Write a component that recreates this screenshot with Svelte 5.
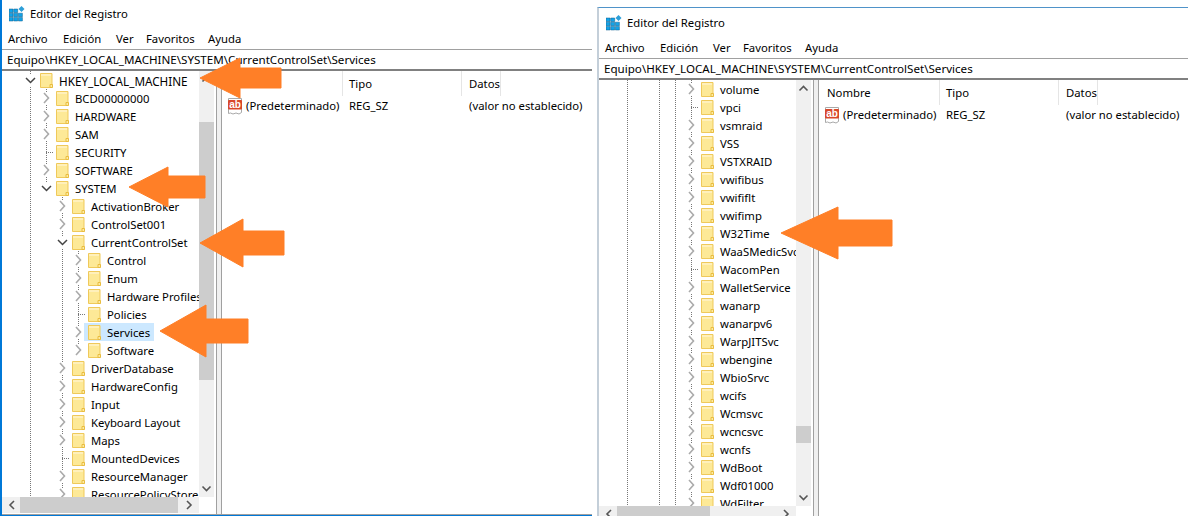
<script>
  const menu = ['Archivo', 'Edición', 'Ver', 'Favoritos', 'Ayuda'];
  const path = 'Equipo\\HKEY_LOCAL_MACHINE\\SYSTEM\\CurrentControlSet\\Services';

  // kind: o = open, c = collapsed, l = leaf; end = last sibling (line stops half way)
  const row = (n, level, kind, guides, extra = {}) => ({ n, level, kind, guides, ...extra });

  const leftRows = [
    row('HKEY_LOCAL_MACHINE', 0, 'o', [], { wide: true }),
    row('BCD00000000', 1, 'c', [0]),
    row('HARDWARE', 1, 'c', [0]),
    row('SAM', 1, 'c', [0]),
    row('SECURITY', 1, 'l', [0]),
    row('SOFTWARE', 1, 'c', [0]),
    row('SYSTEM', 1, 'o', [0], { end: true }),
    row('ActivationBroker', 2, 'c', [0]),
    row('ControlSet001', 2, 'c', [0]),
    row('CurrentControlSet', 2, 'o', [0]),
    row('Control', 3, 'c', [0, 2]),
    row('Enum', 3, 'c', [0, 2]),
    row('Hardware Profiles', 3, 'c', [0, 2]),
    row('Policies', 3, 'l', [0, 2]),
    row('Services', 3, 'c', [0, 2], { sel: true }),
    row('Software', 3, 'c', [0, 2], { end: true }),
    row('DriverDatabase', 2, 'c', [0]),
    row('HardwareConfig', 2, 'c', [0]),
    row('Input', 2, 'c', [0]),
    row('Keyboard Layout', 2, 'c', [0]),
    row('Maps', 2, 'c', [0]),
    row('MountedDevices', 2, 'l', [0]),
    row('ResourceManager', 2, 'c', [0]),
    row('ResourcePolicyStore', 2, 'c', [0])
  ];

  const leaves = ['vpci', 'WacomPen'];
  const rightRows = ['volume', 'vpci', 'vsmraid', 'VSS', 'VSTXRAID', 'vwifibus', 'vwififlt', 'vwifimp', 'W32Time',
    'WaaSMedicSvc', 'WacomPen', 'WalletService', 'wanarp', 'wanarpv6', 'WarpJITSvc', 'wbengine', 'WbioSrvc', 'wcifs',
    'Wcmsvc', 'wcncsvc', 'wcnfs', 'WdBoot', 'Wdf01000', 'WdFilter']
    .map((n) => row(n, 4, leaves.includes(n) ? 'l' : 'c', [0, 2, 3]));

  const windows = [
    { cls: 'back', rows: leftRows, vTop: 51, vH: 258, hW: 158 },
    { cls: 'front', rows: rightRows, vTop: 346, vH: 17, hW: 93 }
  ];

  // tip x, tip y, neck x, head half height, shaft half height, tail x
  const arrows = [
    [200, 78, 240, 20, 10, 281],
    [129, 187, 168, 20, 11, 205],
    [200, 243, 243, 24, 12, 284],
    [160, 331, 206, 26, 12, 248],
    [781, 233, 838, 26, 13, 892]
  ].map(([x, y, nx, hh, sh, tx]) =>
    `${x},${y} ${nx},${y - hh} ${nx},${y - sh} ${tx},${y - sh} ${tx},${y + sh} ${nx},${y + sh} ${nx},${y + hh}`
  );
</script>

{#snippet folder()}
  <svg class="folder" width="13" height="16" viewBox="0 0 13 16">
    <path d="M.5 1.500h11.500v14h-11.500z" fill="#fde997" stroke="#efc95a" />
    <path d="M1 2h10v2H1z" fill="#fff0bb" />
    <path d="M10 15.500v-3h2.500v3z" fill="#fdeaa5" stroke="#e9bd3f" />
  </svg>
{/snippet}

{#snippet win(w)}
  <section class="win {w.cls}">
    <header class="title">
      <svg width="16" height="16" viewBox="0 0 16 16">
        <path d="M0 3h4v3.500H0zM4.700 3h4v3.500h-4zM0 7.200h4v3.500H0zM4.700 7.200h4v3.500h-4zM9.400 7.200h4v3.500h-4zM0 11.400h4V15H0zM4.700 11.400h4V15h-4zM9.400 11.400h4V15h-4z" fill="#12a3e8" stroke="#0c5f8e" stroke-width=".5" />
        <path d="M12.500 0l3 3-3 3-3-3z" fill="#2d9fd8" />
      </svg>
      <span>Editor del Registro</span>
    </header>
    <nav class="menu">
      {#each menu as m}<span>{m}</span>{/each}
    </nav>
    <div class="address">{path}</div>
    <div class="panes">
      <div class="tree">
        <div class="viewport">
          {#each w.rows as r}
            <div class="row">
              {#each Array(r.level) as _, i}
                <span class="cell" class:line={r.guides.includes(i)}></span>
              {/each}
              <span class="cell line" class:end={r.end} class:leaf={r.kind === 'l'}>
                {#if r.kind === 'o'}
                  <svg class="chev" width="13" height="12" viewBox="0 0 13 12"><path d="M2 4l4.500 4.500L11 4" fill="none" stroke="#444" stroke-width="1.500" /></svg>
                {:else if r.kind === 'c'}
                  <svg class="chev" width="9" height="12" viewBox="0 0 9 12"><path d="M2 1l4.500 5L2 11" fill="none" stroke="#aaa" stroke-width="1.600" /></svg>
                {/if}
              </span>
              <span class="item" class:sel={r.sel}>
                {@render folder()}
                <span class="name" class:wide={r.wide}>{r.n}</span>
              </span>
            </div>
          {/each}
        </div>
        <div class="vbar">
          <svg class="up" width="15" height="17" viewBox="0 0 15 17"><path d="M3.500 10.500l4-4 4 4" fill="none" stroke="#555" stroke-width="1.600" /></svg>
          <div class="vtrack">
            <div class="vthumb" style="margin-top:{w.vTop - 17}px;height:{w.vH}px"></div>
          </div>
          <svg class="down" width="15" height="17" viewBox="0 0 15 17"><path d="M3.500 6.500l4 4 4-4" fill="none" stroke="#555" stroke-width="1.600" /></svg>
        </div>
        <div class="hbar">
          <svg width="18" height="16" viewBox="0 0 18 16"><path d="M12 4l-4 4 4 4" fill="none" stroke="#555" stroke-width="1.600" /></svg>
          <div class="hthumb" style="width:{w.hW}px"></div>
          <div class="htrack"></div>
          <svg width="18" height="16" viewBox="0 0 18 16"><path d="M6 4l4 4-4 4" fill="none" stroke="#555" stroke-width="1.600" /></svg>
        </div>
      </div>
      <div class="splitter"></div>
      <div class="list">
        <div class="head">
          <span class="c1">Nombre</span><span class="c2">Tipo</span><span class="c3">Datos</span>
        </div>
        <div class="entry">
          <span class="c1 valname">
            <svg width="16" height="17" viewBox="0 0 16 17">
              <path d="M1.500.5h13v14l-2.500 1.500-3-1-3 1-2.500-1-2 .500z" fill="#fff" stroke="#a9a9a9" />
              <rect x="1" y="2" width="14" height="9.500" rx="1" fill="#d9482b" />
              <text x="8" y="10" class="ab">ab</text>
            </svg>
            <span>(Predeterminado)</span>
          </span><span class="c2">REG_SZ</span><span class="c3">(valor no establecido)</span>
        </div>
      </div>
    </div>
  </section>
{/snippet}

<main class="desk">
  {#each windows as w}
    {@render win(w)}
  {/each}
  <svg class="arrows" width="1197" height="516" viewBox="0 0 1197 516">
    {#each arrows as points}
      <polygon {points} fill="#ff7f27" stroke="#ff7f27" stroke-width="1" stroke-linejoin="round" />
    {/each}
  </svg>
</main>

<style>
  :global(body) {
    margin: 0;
    background: #fff;
  }
  .desk {
    position: relative;
    width: 1197px;
    height: 516px;
    overflow: hidden;
    font: 11.3px/16px "Noto Sans", sans-serif;
    color: #000;
  }
  .win {
    position: absolute;
    box-sizing: border-box;
    height: 518px;
    display: flex;
    flex-direction: column;
    background: #fff;
    border-left: 2px solid #0078d7;
    border-bottom: 1px solid #0078d7;
  }
  .back {
    left: 0;
    top: -2px;
    width: 592px;
  }
  .front {
    left: 597px;
    top: 7px;
    width: 591px;
    border-top: 1px solid #4f93c9;
    border-left-color: #c4cfd9;
  }
  .title {
    box-sizing: border-box;
    height: 30px;
    flex: none;
    display: flex;
    align-items: center;
    gap: 5px;
    padding: 2px 0 0 7px;
  }
  .front .title {
    height: 29px;
    padding-top: 1px;
  }
  .menu {
    height: 21px;
    flex: none;
    display: grid;
    grid-template-columns: 55px 53px 30px 62px auto;
    justify-content: start;
    align-items: center;
    padding-left: 6px;
  }
  .address {
    box-sizing: border-box;
    height: 22px;
    flex: none;
    padding: 1px 0 0 5px;
    font-size: 11.6px;
    line-height: 17px;
    border-top: 1px solid #a0a0a0;
    border-bottom: 2px solid #808080;
    white-space: nowrap;
  }
  .panes {
    flex: 1;
    min-height: 0;
    display: flex;
    border-bottom: 1px solid #a0a0a0;
  }
  .tree {
    width: 214px;
    flex: none;
    display: grid;
    grid-template: 426px 16px / 197px 15px 2px;
    overflow: hidden;
  }
  .viewport {
    grid-area: 1 / 1;
    overflow: hidden;
    padding-left: 20px;
  }
  .row {
    height: 18px;
    display: flex;
    white-space: nowrap;
  }
  .cell {
    width: 16px;
    height: 18px;
    flex: none;
    display: flex;
    align-items: center;
    justify-content: center;
  }
  .line {
    background: linear-gradient(#777 50%, transparent 50%) 8px 0 / 1px 2px repeat-y;
  }
  .line.end {
    background:
      linear-gradient(#fff, #fff) 8px 9px / 1px 9px no-repeat,
      linear-gradient(#777 50%, transparent 50%) 8px 0 / 1px 2px repeat-y;
  }
  .line.leaf {
    background:
      linear-gradient(#fff, #fff) 0 9px / 8px 1px no-repeat,
      linear-gradient(90deg, #777 50%, transparent 50%) 0 9px / 2px 1px repeat-x,
      linear-gradient(#777 50%, transparent 50%) 8px 0 / 1px 2px repeat-y;
  }
  .chev {
    background: #fff;
  }
  .item {
    margin-left: -2px;
    padding: 0 4px;
    height: 18px;
    display: flex;
    align-items: center;
    gap: 6px;
  }
  .item.sel {
    background: #cce8ff;
  }
  .folder {
    flex: none;
  }
  .name {
    padding-top: 2px;
  }
  .name.wide {
    font-size: 11.7px;
  }
  .vbar {
    grid-area: 1 / 2;
    background: #f0f0f0;
    display: flex;
    flex-direction: column;
    height: 426px;
  }
  .up,
  .down {
    flex: none;
  }
  .vtrack {
    flex: 1;
    min-height: 0;
    overflow: hidden;
  }
  .vthumb {
    background: #cdcdcd;
  }
  .hbar {
    grid-area: 2 / 1 / 2 / 3;
    display: flex;
    align-items: stretch;
    background: #f0f0f0;
    width: 197px;
  }
  .hthumb {
    background: #cdcdcd;
    flex: none;
  }
  .htrack {
    flex: 1;
  }
  .hbar svg {
    flex: none;
  }
  .splitter {
    box-sizing: border-box;
    width: 6px;
    flex: none;
    background: #f0f0f0;
    border-left: 1px solid #a0a0a0;
    border-right: 1px solid #a0a0a0;
  }
  .list {
    flex: 1;
    min-width: 0;
    white-space: nowrap;
  }
  .head {
    height: 25px;
    display: flex;
    align-items: stretch;
  }
  .head span {
    display: flex;
    align-items: center;
    border-right: 1px solid #e5e5e5;
    box-sizing: border-box;
  }
  .entry {
    box-sizing: border-box;
    height: 18px;
    padding-top: 2px;
    display: flex;
    align-items: center;
  }
  .c1 {
    width: 121px;
    flex: none;
    box-sizing: border-box;
    padding-left: 8px;
  }
  .c2 {
    width: 119px;
    flex: none;
    box-sizing: border-box;
    padding-left: 6px;
  }
  .c3 {
    flex: none;
    box-sizing: border-box;
    padding-left: 7px;
  }
  .valname {
    display: flex;
    align-items: center;
    gap: 3px;
    padding-left: 5px;
  }
  .valname svg {
    flex: none;
  }
  .ab {
    font: bold 10px "Liberation Sans", sans-serif;
    fill: #fff;
    text-anchor: middle;
  }
  .arrows {
    position: absolute;
    left: 0;
    top: 0;
    pointer-events: none;
  }
</style>
